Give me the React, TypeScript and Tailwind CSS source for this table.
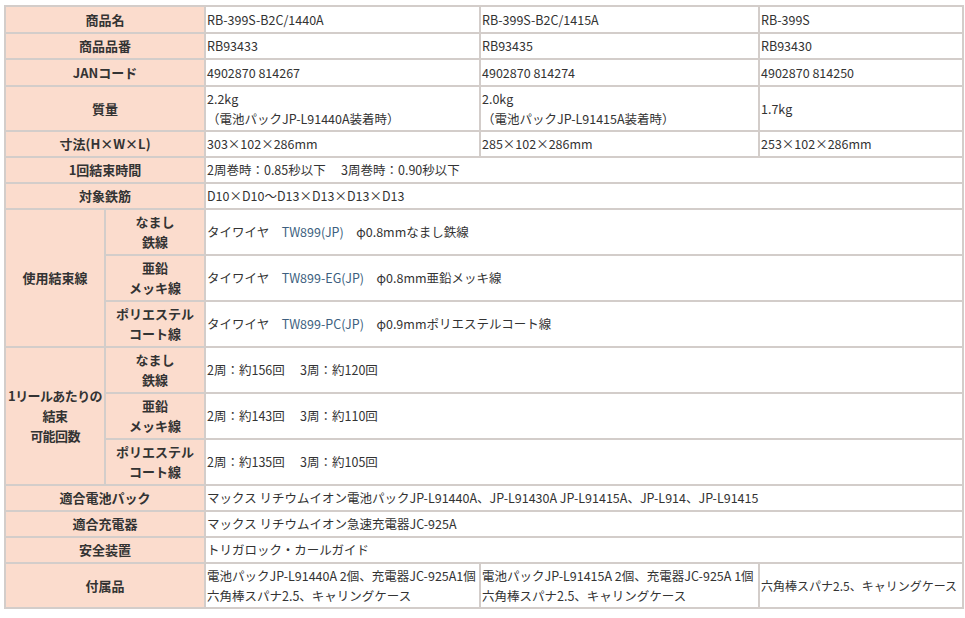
import React from 'react';

const th = 'border-2 border-[#d3cdca] bg-[#fbdccd] text-center align-middle font-bold text-[13px] text-[#333] leading-[20px] whitespace-nowrap';
const td = 'border-2 border-[#d3cdca] bg-white align-middle px-[1px] text-[12.5px] text-[#333] leading-[20px]';
const link = 'text-[#3d5f80]';

const products = [
  { name: 'RB-399S-B2C/1440A', code: 'RB93433', jan: '4902870 814267', weight: ['2.2kg', '（電池パックJP-L91440A装着時）'], size: '303×102×286mm' },
  { name: 'RB-399S-B2C/1415A', code: 'RB93435', jan: '4902870 814274', weight: ['2.0kg', '（電池パックJP-L91415A装着時）'], size: '285×102×286mm' },
  { name: 'RB-399S', code: 'RB93430', jan: '4902870 814250', weight: ['1.7kg'], size: '253×102×286mm' },
];

const wires = [
  { label: ['なまし', '鉄線'], model: 'TW899(JP)', spec: 'φ0.8mmなまし鉄線', count: '2周：約156回　 3周：約120回' },
  { label: ['亜鉛', 'メッキ線'], model: 'TW899-EG(JP)', spec: 'φ0.8mm亜鉛メッキ線', count: '2周：約143回　 3周：約110回' },
  { label: ['ポリエステル', 'コート線'], model: 'TW899-PC(JP)', spec: 'φ0.9mmポリエステルコート線', count: '2周：約135回　 3周：約105回' },
];

const Lines: React.FC<{ lines: string[] }> = ({ lines }) => (
  <>
    {lines.map((l, i) => (
      <div key={i}>{l}</div>
    ))}
  </>
);

export default function App() {
  return (
    <div
      className="w-[965px] h-[618px] bg-white pl-[4px] pt-[5px]"
      style={{ fontFamily: '"Noto Sans CJK JP", "Noto Sans", sans-serif' }}
    >
      <table className="table-fixed border-collapse w-[958px]">
        <colgroup>
          <col className="w-[100px]" />
          <col className="w-[100px]" />
          <col className="w-[275px]" />
          <col className="w-[279px]" />
          <col className="w-[204px]" />
        </colgroup>
        <tbody>
          <tr className="h-[27px]">
            <th colSpan={2} className={th}>商品名</th>
            {products.map((p) => (
              <td key={p.code} className={td}>{p.name}</td>
            ))}
          </tr>
          <tr className="h-[26px]">
            <th colSpan={2} className={th}>商品品番</th>
            {products.map((p) => (
              <td key={p.code} className={td}>{p.code}</td>
            ))}
          </tr>
          <tr className="h-[27px]">
            <th colSpan={2} className={th}>JANコード</th>
            {products.map((p) => (
              <td key={p.code} className={td}>{p.jan}</td>
            ))}
          </tr>
          <tr className="h-[45px]">
            <th colSpan={2} className={th}>質量</th>
            {products.map((p) => (
              <td key={p.code} className={td}><Lines lines={p.weight} /></td>
            ))}
          </tr>
          <tr className="h-[26px]">
            <th colSpan={2} className={th}>寸法(H×W×L)</th>
            {products.map((p) => (
              <td key={p.code} className={td}>{p.size}</td>
            ))}
          </tr>
          <tr className="h-[26px]">
            <th colSpan={2} className={th}>1回結束時間</th>
            <td colSpan={3} className={td}>2周巻時：0.85秒以下　 3周巻時：0.90秒以下</td>
          </tr>
          <tr className="h-[26px]">
            <th colSpan={2} className={th}>対象鉄筋</th>
            <td colSpan={3} className={td}>D10×D10～D13×D13×D13×D13</td>
          </tr>
          {wires.map((w, i) => (
            <tr key={w.model} className="h-[46px]">
              {i === 0 && (
                <th rowSpan={3} className={th}>使用結束線</th>
              )}
              <th className={th}><Lines lines={w.label} /></th>
              <td colSpan={3} className={td}>
                タイワイヤ　<span className={link}>{w.model}</span>　{w.spec}
              </td>
            </tr>
          ))}
          {wires.map((w, i) => (
            <tr key={w.count} className="h-[46px]">
              {i === 0 && (
                <th rowSpan={3} className={`${th} tracking-[-0.6px]`}>
                  <Lines lines={['1リールあたりの', '結束', '可能回数']} />
                </th>
              )}
              <th className={th}><Lines lines={w.label} /></th>
              <td colSpan={3} className={td}>{w.count}</td>
            </tr>
          ))}
          <tr className="h-[26px]">
            <th colSpan={2} className={th}>適合電池パック</th>
            <td colSpan={3} className={td}>
              マックス リチウムイオン電池パックJP-L91440A、JP-L91430A JP-L91415A、JP-L914、JP-L91415
            </td>
          </tr>
          <tr className="h-[26px]">
            <th colSpan={2} className={th}>適合充電器</th>
            <td colSpan={3} className={td}>マックス リチウムイオン急速充電器JC-925A</td>
          </tr>
          <tr className="h-[26px]">
            <th colSpan={2} className={th}>安全装置</th>
            <td colSpan={3} className={td}>トリガロック・カールガイド</td>
          </tr>
          <tr className="h-[45px]">
            <th colSpan={2} className={th}>付属品</th>
            <td className={`${td} whitespace-nowrap overflow-hidden`}>
              <Lines lines={['電池パックJP-L91440A 2個、充電器JC-925A1個', '六角棒スパナ2.5、キャリングケース']} />
            </td>
            <td className={`${td} whitespace-nowrap overflow-hidden`}>
              <Lines lines={['電池パックJP-L91415A 2個、充電器JC-925A 1個', '六角棒スパナ2.5、キャリングケース']} />
            </td>
            <td className={`${td} whitespace-nowrap !text-[12px]`}>六角棒スパナ2.5、キャリングケース</td>
          </tr>
        </tbody>
      </table>
    </div>
  );
}
